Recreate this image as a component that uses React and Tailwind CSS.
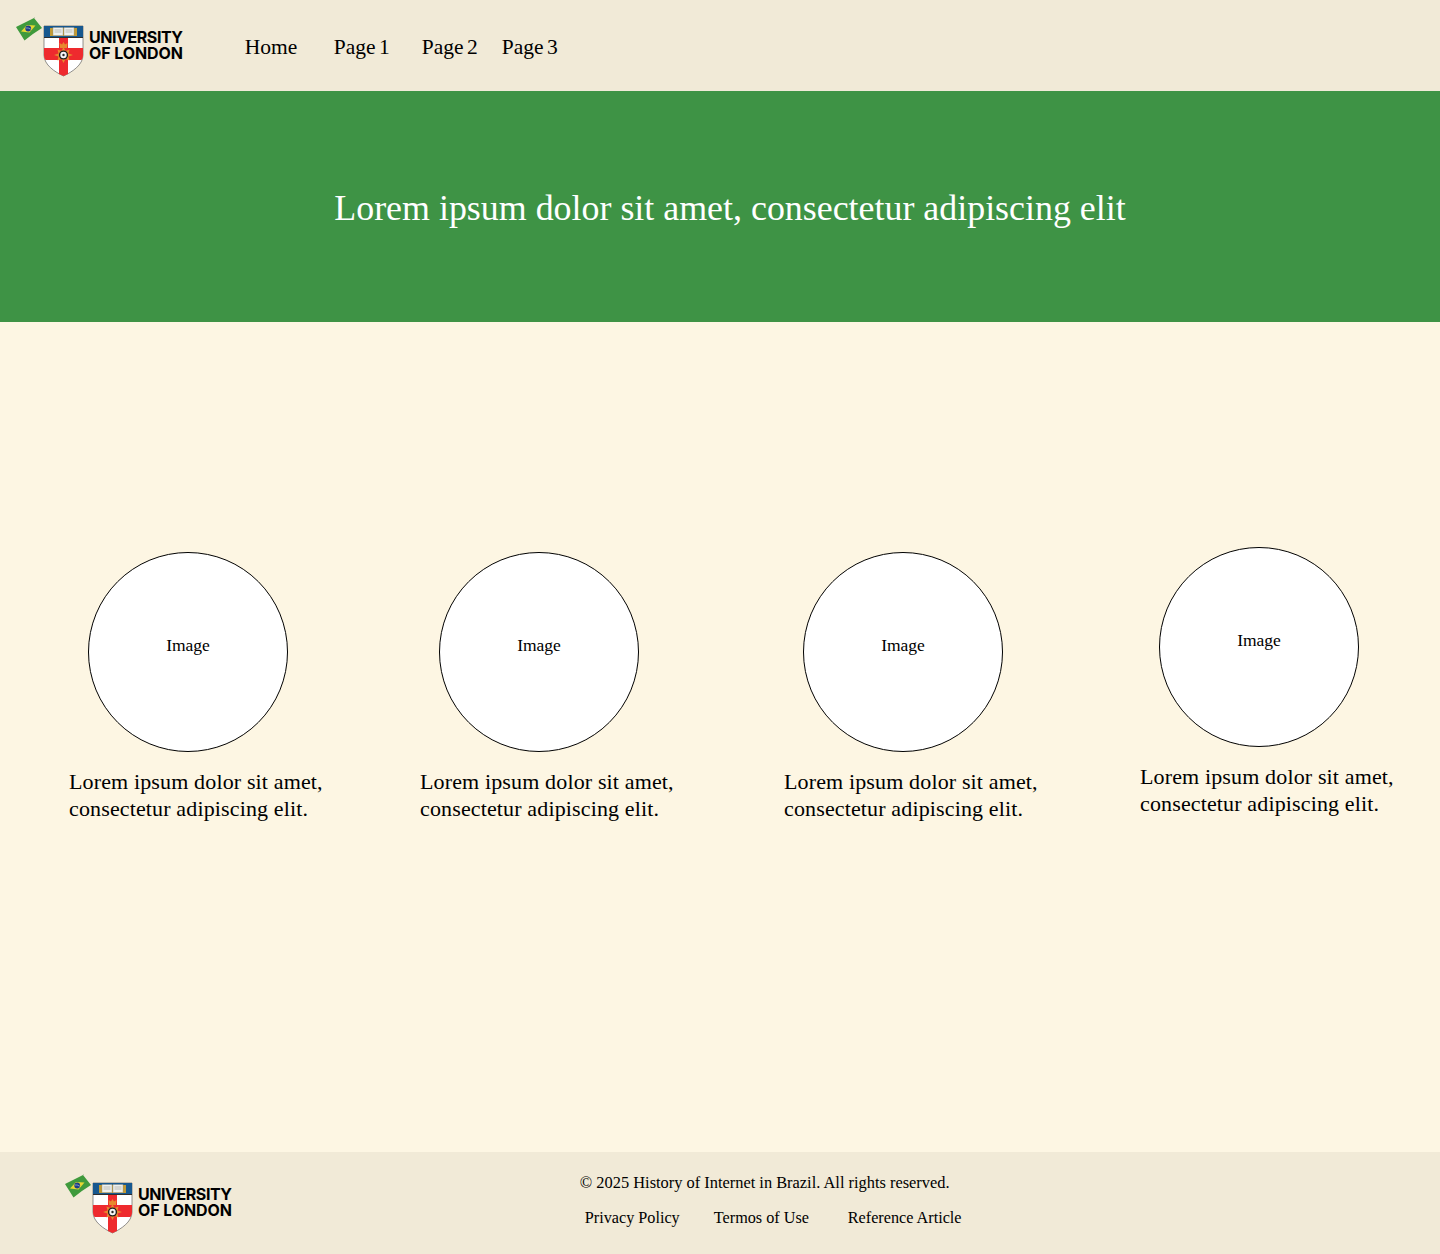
const serif = "font-['Liberation_Serif',serif]";

function Logo() {
  return (
    <div className="flex items-start">
      <svg width="73" height="60" viewBox="0 0 73 60" className="shrink-0">
        {/* flag */}
        <path d="M0 10 Q9 5.5 18 1 L26 11 Q17 16.5 8.5 23.5 Z" fill="#3f9a3c" />
        <path d="M5 14.5 L11 8 L19.5 8.5 L13.5 15.5 Z" fill="#e6d832" />
        <circle cx="12.2" cy="11.5" r="2.9" fill="#1d3f86" />
        <path d="M9.6 11 Q12.2 10.4 14.8 12.2" stroke="#e8eef0" strokeWidth="0.5" fill="none" />
        <rect x="18" y="0" width="1" height="1" fill="#c9c9b8" />
        {/* shield */}
        <path d="M28 9 H67 V38 C67 48 56 55 47.5 59 C39 55 28 48 28 38 Z" fill="#fff" stroke="#4a4a4a" strokeWidth="0.6" />
        <rect x="28" y="9" width="39" height="11" fill="#17588f" />
        <rect x="34" y="11" width="27" height="8" fill="#c29a35" />
        <rect x="37" y="10.5" width="10" height="8" fill="#eef0ee" stroke="#8a8a80" strokeWidth="0.4" />
        <rect x="48" y="10.5" width="10" height="8" fill="#eef0ee" stroke="#8a8a80" strokeWidth="0.4" />
        <path d="M38.5 13 H45.5 M38.5 15 H45.5 M49.5 13 H56.5 M49.5 15 H56.5" stroke="#9a9a90" strokeWidth="0.6" />
        <rect x="28" y="20" width="39" height="1" fill="#2e2e2e" />
        <path d="M43 21 H52 V57 L47.5 59 L43 57 Z" fill="#ee2a2e" />
        <path d="M28 31 H67 V38 C67 40 66.5 41.5 65.5 43 H29.5 C28.5 41.5 28 40 28 38 Z" fill="#ee2a2e" />
        <path d="M44 31 L43.5 26 L46 27.5 L47.5 25 L49 27.5 L51.5 26 L51 31 Z" fill="#e8892f" />
        <path d="M47.5 30 L49.5 34 L53.5 32.5 L52.5 36.5 L57 38 L52.5 39.5 L53.5 43.5 L49.5 42 L47.5 46 L45.5 42 L41.5 43.5 L42.5 39.5 L38 38 L42.5 36.5 L41.5 32.5 L45.5 34 Z" fill="#e8892f" />
        <circle cx="47.5" cy="38" r="4.6" fill="#1c1c1c" />
        <circle cx="47.5" cy="38" r="3.2" fill="#f5f5f5" />
        <circle cx="47.5" cy="38" r="1.2" fill="#2a2a2a" />
      </svg>
      <div className="mt-[12px] font-['Inter',sans-serif] font-bold text-[16px] leading-[16px] text-black whitespace-nowrap">
        <div className="tracking-[-0.45px]">UNIVERSITY</div>
        <div className="tracking-[-0.1px]">OF LONDON</div>
      </div>
    </div>
  );
}

function Feature({ className }) {
  return (
    <div className={`w-[238px] shrink-0 flex flex-col items-center ${className}`}>
      <div className="w-[200px] h-[200px] rounded-full bg-white border border-black flex justify-center pt-[81px] text-[17.5px] leading-[22px] text-black">
        Image
      </div>
      <p className="mt-[16px] self-start whitespace-nowrap text-[22px] leading-[27px] tracking-[0.14px] text-black">
        Lorem ipsum dolor sit amet,
        <br />
        consectetur adipiscing elit.
      </p>
    </div>
  );
}

export default function App() {
  return (
    <div className={`min-h-[1254px] flex flex-col bg-[#fdf6e3] ${serif}`}>
      <header className="h-[91px] bg-[#f1ead7] pl-4 pt-[17px] flex items-start">
        <Logo />
        <nav className="ml-[62px] mt-[15px] flex text-[21.5px] leading-[30px] [word-spacing:-2px] text-black whitespace-nowrap">
          <a className="w-[89px]">Home</a>
          <a className="w-[88px]">Page 1</a>
          <a className="w-[80px]">Page 2</a>
          <a>Page 3</a>
        </nav>
      </header>

      <section className="h-[231px] bg-[#3e9345] flex justify-center pt-[95px] pl-[20px]">
        <h1 className="text-[35.9px] leading-[44px] font-normal text-white whitespace-nowrap">
          Lorem ipsum dolor sit amet, consectetur adipiscing elit
        </h1>
      </section>

      <main className="h-[830px] pl-[69px] pt-[225px] flex items-start">
        <Feature className="mt-[5px]" />
        <Feature className="mt-[5px] ml-[113px]" />
        <Feature className="mt-[5px] ml-[126px]" />
        <Feature className="ml-[118px]" />
      </main>

      <footer className="h-[102px] bg-[#f1ead7] pl-[65px] pt-[22px] flex items-start">
        <Logo />
        <div className="ml-[348px] -mt-[2px] text-black whitespace-nowrap">
          <p className="text-[16.4px] leading-[22px]">© 2025 History of Internet in Brazil. All rights reserved.</p>
          <div className="mt-[13px] ml-[5px] flex text-[16.2px] leading-[22px]">
            <a className="w-[129px]">Privacy Policy</a>
            <a className="w-[134px]">Termos of Use</a>
            <a>Reference Article</a>
          </div>
        </div>
      </footer>
    </div>
  );
}
